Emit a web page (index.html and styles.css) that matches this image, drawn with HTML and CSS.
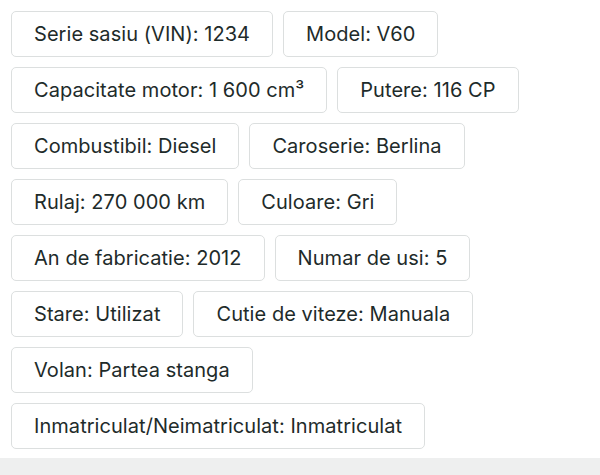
FILE: index.html
```html
<!DOCTYPE html>
<html>
<head>
<meta charset="utf-8">
<link rel="stylesheet" href="styles.css">
</head>
<body>
<div class="page">
  <div class="specs">
    <div class="row"><span class="chip">Serie sasiu (VIN): 1234</span><span class="chip">Model: V60</span></div>
    <div class="row"><span class="chip">Capacitate motor: 1 600 cm³</span><span class="chip">Putere: 116 CP</span></div>
    <div class="row"><span class="chip">Combustibil: Diesel</span><span class="chip">Caroserie: Berlina</span></div>
    <div class="row"><span class="chip">Rulaj: 270 000 km</span><span class="chip">Culoare: Gri</span></div>
    <div class="row"><span class="chip">An de fabricatie: 2012</span><span class="chip">Numar de usi: 5</span></div>
    <div class="row"><span class="chip">Stare: Utilizat</span><span class="chip">Cutie de viteze: Manuala</span></div>
    <div class="row"><span class="chip">Volan: Partea stanga</span></div>
    <div class="row"><span class="chip">Inmatriculat/Neimatriculat: Inmatriculat</span></div>
  </div>
  <div class="band"></div>
</div>
</body>
</html>
```
FILE: styles.css
```css
html, body {
  margin: 0;
  padding: 0;
  background: #ffffff;
}
.page {
  width: 600px;
  height: 475px;
  display: flex;
  flex-direction: column;
  overflow: hidden;
}
.specs {
  display: flex;
  flex-direction: column;
  gap: 10px;
  padding: 11px 0 0 11px;
  flex: 1;
}
.row {
  display: flex;
  gap: 10px;
}
.chip {
  box-sizing: border-box;
  height: 46px;
  display: flex;
  align-items: center;
  padding: 0 22px 1px 22px;
  border: 1px solid #dcdfdf;
  border-radius: 5px;
  font-family: Inter, "Noto Sans", sans-serif;
  font-size: 20px;
  letter-spacing: 0.05px;
  color: #1e2b2a;
  white-space: nowrap;
  background: #fff;
}
.band {
  height: 17px;
  background: #eeefef;
}
```
